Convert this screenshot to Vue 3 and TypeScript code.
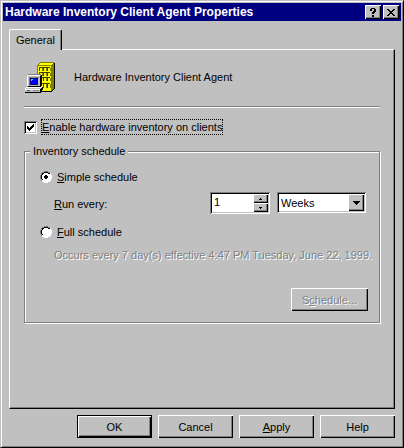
<script setup lang="ts">
import { ref } from 'vue'

type Mode = 'simple' | 'full'

const enabled = ref<boolean>(true)
const mode = ref<Mode>('simple')
const interval = ref<string>('1')
const unit = ref<string>('Weeks')
const units: string[] = ['Hours', 'Days', 'Weeks']

function step(delta: number): void {
  interval.value = String(Math.max(1, (parseInt(interval.value, 10) || 1) + delta))
}
</script>

<template>
  <main class="window">
    <header class="titlebar">
      <h1 class="title">Hardware Inventory Client Agent Properties</h1>
      <div class="caption-buttons">
        <button type="button" class="caption-button" aria-label="What's this?">
          <svg width="8" height="9" viewBox="0 0 8 9" shape-rendering="crispEdges">
            <path d="M2 0h4v1h1v3H6v1H5v1H3V4h1V3h1V1H3v2H1V1h1zM3 7h2v2H3z" />
          </svg>
        </button>
        <button type="button" class="caption-button" aria-label="Close">
          <svg width="8" height="7" viewBox="0 0 8 7" shape-rendering="crispEdges">
            <path d="M0 0h2v1h1v1h2V1h1V0h2v1H7v1H6v1H5v1h1v1h1v1h1v1H6V6H5V5H3v1H2v1H0V6h1V5h1V4h1V3H2V2H1V1H0z" />
          </svg>
        </button>
      </div>
    </header>

    <nav class="tabs" role="tablist">
      <button type="button" class="tab" role="tab" aria-selected="true">General</button>
    </nav>

    <section class="panel">
      <div class="summary">
        <svg class="agent-icon" width="32" height="32" viewBox="0 0 32 32" shape-rendering="crispEdges">
          <path fill="#808000" d="M16 1h14v1H16zM15 2h1v1h-1zM14 3h1v1h-1zM13 4h1v26h-1z" />
          <path fill="#ffff00" d="M16 2h13v1h-1v1H15V3h1zM14 4h13v26H14z" />
          <path fill="#808000" d="M14 4h13v1H14zM27 4h1V3h1V2h1v26h-1v1h-1v1h-1z" />
          <path fill="#000" d="M30 2h1v26h-1v1h-1v1h-1v1H17v-1h11v-1h1v-1h1z" />
          <path fill="#404000" d="M15 6h11v1H15zM15 11h11v1H15zM15 16h11v1H15zM17 22h9v1h-9zM15 7h1v3h-1zM19 7h1v3h-1zM23 7h1v3h-1zM15 12h1v3h-1zM19 12h1v3h-1zM23 12h1v3h-1zM19 17h1v3h-1zM23 17h1v3h-1zM19 23h1v4h-1zM23 23h1v4h-1z" />
          <path fill="#808000" d="M18 7h1v3h-1zM22 7h1v3h-1zM26 7h1v3h-1zM18 12h1v3h-1zM22 12h1v3h-1zM26 12h1v3h-1zM22 17h1v3h-1zM26 17h1v3h-1zM22 23h1v4h-1zM26 23h1v4h-1z" />
          <path fill="#808080" d="M4 13h13v1h1v11h-2v1H3V15h1z" />
          <path fill="#fff" d="M4 14h12v1H4zM3 15h1v10H3z" />
          <path fill="#c0c0c0" d="M4 15h12v10H4z" />
          <path fill="#000" d="M17 14h1v11h-1v1H4v-1h12V15h1z" />
          <path fill="#808080" d="M5 16h10v1H6v8H5z" />
          <path fill="#000080" d="M6 17h8v7H6z" />
          <path fill="#0000ff" d="M7 18h6v5H7z" />
          <path fill="#00ffff" d="M7 18h2v1H8v1H7z" />
          <path fill="#fff" d="M3 26h14v1H2v1H1v-1h1v-1zM1 28h15v1H1z" />
          <path fill="#c0c0c0" d="M3 27h14v1H2v-1zM1 29h15v2H1z" />
          <path fill="#008000" d="M3 29h3v1H3z" />
          <path fill="#808080" d="M9 29h6v1H9zM16 28h1v3h-1z" />
          <path fill="#000" d="M18 26h1v3h-1v1h-1v2H1v-1h15v-3h1v-1h1z" />
        </svg>
        <span>Hardware Inventory Client Agent</span>
      </div>

      <hr class="rule" />

      <div class="option enable">
        <span class="check-box">
          <input id="enable" v-model="enabled" type="checkbox" class="check-input" />
          <svg v-if="enabled" class="check-mark" width="7" height="7" viewBox="0 0 7 7" shape-rendering="crispEdges">
            <path d="M0 2h1v1h1v1h1V3h1V2h1V1h1V0h1v3H6v1H5v1H4v1H3v1H2V6H1V5H0z" />
          </svg>
        </span>
        <label for="enable" class="focused"><u>E</u>nable hardware inventory on clients</label>
      </div>

      <fieldset class="group">
        <legend class="legend">Inventory schedule</legend>

        <div class="option">
          <span class="radio">
            <input id="simple" v-model="mode" type="radio" name="mode" value="simple" class="radio-input" />
            <svg class="radio-art" width="12" height="12" viewBox="0 0 12 12" shape-rendering="crispEdges">
              <path fill="#fff" d="M4 1h4v1h2v2h1v4h-1v2H8v1H4v-1H2V8H1V4h1V2h2z" />
              <path fill="#808080" d="M8 0H4v1H2v1H1v2H0v4h1v2h1V8H1V4h1V2h2V1h4v1h2V1H8z" />
              <path fill="#000" d="M8 1H4v1H2v2H1v4h1v1h1V8H2V4h1V3h1V2h4v1h2V2H8z" />
              <path fill="#fff" d="M11 2h-1v2h1v4h-1v2H8v1H4v-1H2v1h2v1h4v-1h2v-1h1V8h1V4h-1z" />
              <path v-if="mode === 'simple'" fill="#000" d="M5 4h2v1h1v2H7v1H5V7H4V5h1z" />
            </svg>
          </span>
          <label for="simple"><u>S</u>imple schedule</label>
        </div>

        <div class="run-row">
          <label for="interval" class="run-label"><u>R</u>un every:</label>
          <div class="spinner">
            <input id="interval" v-model="interval" type="text" class="spinner-input" />
            <div class="spinner-buttons">
              <button type="button" class="spin" aria-label="Increase" @click="step(1)">
                <svg width="3" height="2" viewBox="0 0 3 2" shape-rendering="crispEdges"><path d="M1 0h1v1h1v1H0V1h1z" /></svg>
              </button>
              <button type="button" class="spin" aria-label="Decrease" @click="step(-1)">
                <svg width="3" height="2" viewBox="0 0 3 2" shape-rendering="crispEdges"><path d="M0 0h3v1H2v1H1V1H0z" /></svg>
              </button>
            </div>
          </div>
          <div class="combo">
            <select v-model="unit" class="combo-select" aria-label="Unit">
              <option v-for="u in units" :key="u">{{ u }}</option>
            </select>
            <span class="combo-arrow">
              <svg width="7" height="4" viewBox="0 0 7 4" shape-rendering="crispEdges"><path d="M0 0h7v1H6v1H5v1H4v1H3V3H2V2H1V1H0z" /></svg>
            </span>
          </div>
        </div>

        <div class="option full">
          <span class="radio">
            <input id="full" v-model="mode" type="radio" name="mode" value="full" class="radio-input" />
            <svg class="radio-art" width="12" height="12" viewBox="0 0 12 12" shape-rendering="crispEdges">
              <path fill="#fff" d="M4 1h4v1h2v2h1v4h-1v2H8v1H4v-1H2V8H1V4h1V2h2z" />
              <path fill="#808080" d="M8 0H4v1H2v1H1v2H0v4h1v2h1V8H1V4h1V2h2V1h4v1h2V1H8z" />
              <path fill="#000" d="M8 1H4v1H2v2H1v4h1v1h1V8H2V4h1V3h1V2h4v1h2V2H8z" />
              <path fill="#fff" d="M11 2h-1v2h1v4h-1v2H8v1H4v-1H2v1h2v1h4v-1h2v-1h1V8h1V4h-1z" />
              <path v-if="mode === 'full'" fill="#000" d="M5 4h2v1h1v2H7v1H5V7H4V5h1z" />
            </svg>
          </span>
          <label for="full"><u>F</u>ull schedule</label>
        </div>

        <p class="occurs">Occurs every 7 day(s) effective 4:47 PM Tuesday, June 22, 1999.</p>

        <div class="schedule-row">
          <button type="button" class="push schedule" :disabled="mode === 'simple'">S<u>c</u>hedule...</button>
        </div>
      </fieldset>
    </section>

    <footer class="actions">
      <button type="button" class="push default">OK</button>
      <button type="button" class="push">Cancel</button>
      <button type="button" class="push"><u>A</u>pply</button>
      <button type="button" class="push">Help</button>
    </footer>
  </main>
</template>

<style>
body {
  background: #c0c0c0;
}
</style>

<style scoped>
.window,
.window * {
  box-sizing: border-box;
}

.window {
  padding: 2px 2px 9px 2px;
  border: 1px solid;
  border-color: #c0c0c0 #000 #000 #c0c0c0;
  box-shadow: inset 1px 1px 0 #fff, inset -1px -1px 0 #808080;
  background: #c0c0c0;
  color: #000;
  font: 11px/16px "Liberation Sans", Arial, sans-serif;
}

button,
input,
select {
  margin: 0;
  padding: 0;
  border: 0;
  border-radius: 0;
  outline: 0;
  appearance: none;
  color: inherit;
  font: inherit;
}

svg {
  display: block;
}

u {
  text-decoration: underline;
  text-decoration-thickness: 1px;
  text-underline-offset: 1px;
}

.titlebar {
  display: flex;
  align-items: center;
  justify-content: space-between;
  height: 18px;
  padding: 0 2px;
  background: #000080;
}

.title {
  margin: 0;
  color: #fff;
  font-size: 12px;
  font-weight: bold;
  line-height: 18px;
  white-space: nowrap;
}

.caption-buttons {
  display: flex;
  gap: 2px;
}

.caption-button {
  display: flex;
  align-items: center;
  justify-content: center;
  width: 16px;
  height: 14px;
  background: #c0c0c0;
  box-shadow: inset 1px 1px 0 #fff, inset -1px -1px 0 #000, inset -2px -2px 0 #808080;
}

.tabs {
  display: flex;
  padding: 8px 6px 0;
}

.tab {
  position: relative;
  width: 53px;
  height: 21px;
  margin-bottom: -1px;
  border: solid;
  border-width: 1px 1px 0;
  border-color: #fff #000 #fff #fff;
  border-radius: 2px 2px 0 0;
  background: #c0c0c0;
  box-shadow: inset -1px 0 0 #808080;
}

.panel {
  margin: 0 6px;
  padding: 11px 14px 85px;
  border: 1px solid;
  border-color: #fff #000 #000 #fff;
  box-shadow: inset -1px -1px 0 #808080;
}

.summary {
  display: flex;
  align-items: center;
  gap: 18px;
}

.rule {
  height: 2px;
  margin: 13px 0 11px;
  border: 0;
  border-top: 1px solid #808080;
  background: #fff;
}

.option {
  display: flex;
  align-items: center;
  gap: 5px;
  height: 16px;
}

.enable {
  gap: 4px;
}

.check-box,
.radio,
.combo {
  display: grid;
}

.check-box > *,
.radio > *,
.combo > * {
  grid-area: 1 / 1;
}

.check-input {
  width: 13px;
  height: 13px;
  background: #fff;
  box-shadow: inset 1px 1px 0 #808080, inset -1px -1px 0 #fff, inset 2px 2px 0 #000, inset -2px -2px 0 #c0c0c0;
}

.check-mark {
  place-self: center;
  pointer-events: none;
}

.focused {
  height: 16px;
  padding: 0 1px;
  outline: 1px dotted #000;
  outline-offset: -1px;
}

.group {
  min-width: 0;
  margin: 10px 0 0;
  padding: 11px 11px 11px 15px;
  border: 1px solid #808080;
  box-shadow: 1px 1px 0 #fff, inset 1px 1px 0 #fff;
}

.legend {
  margin-left: -10px;
  padding: 0 3px;
  background: #c0c0c0;
  line-height: 13px;
}

.radio-input {
  width: 12px;
  height: 12px;
}

.radio-art {
  pointer-events: none;
}

.run-row {
  display: flex;
  align-items: flex-start;
  margin-top: 7px;
  padding: 0 2px 0 14px;
}

.run-label {
  flex: 1;
  line-height: 24px;
  height: 22px;
}

.spinner {
  display: flex;
  width: 60px;
  height: 22px;
  padding: 2px;
  background: #fff;
  box-shadow: inset 1px 1px 0 #808080, inset -1px -1px 0 #fff, inset 2px 2px 0 #000, inset -2px -2px 0 #c0c0c0;
}

.spinner-input {
  flex: 1;
  min-width: 0;
  height: 16px;
  padding-left: 2px;
  background: transparent;
}

.spinner-buttons {
  display: flex;
  flex-direction: column;
  width: 15px;
}

.spin {
  display: flex;
  flex: 1;
  align-items: center;
  justify-content: center;
  background: #c0c0c0;
  box-shadow: inset 1px 1px 0 #fff, inset -1px -1px 0 #000, inset -2px -2px 0 #808080;
}

.combo {
  width: 89px;
  height: 21px;
  margin-left: 7px;
  padding: 2px;
  background: #fff;
  box-shadow: inset 1px 1px 0 #808080, inset -1px -1px 0 #fff, inset 2px 2px 0 #000, inset -2px -2px 0 #c0c0c0;
}

.combo-select {
  width: 100%;
  height: 17px;
  padding-left: 2px;
  background: transparent;
}

.combo-arrow {
  display: flex;
  align-items: center;
  justify-content: center;
  justify-self: end;
  width: 16px;
  background: #c0c0c0;
  box-shadow: inset 1px 1px 0 #fff, inset -1px -1px 0 #000, inset -2px -2px 0 #808080;
  pointer-events: none;
}

.full {
  margin-top: 10px;
}

.occurs {
  margin: 7px 0 25px;
  padding-left: 14px;
  color: #808080;
  text-shadow: 1px 1px 0 #fff;
  white-space: nowrap;
}

.schedule-row {
  display: flex;
  justify-content: flex-end;
}

.push {
  width: 75px;
  height: 23px;
  background: #c0c0c0;
  box-shadow: inset 1px 1px 0 #fff, inset -1px -1px 0 #000, inset -2px -2px 0 #808080;
  text-align: center;
}

.push:disabled {
  color: #808080;
  text-shadow: 1px 1px 0 #fff;
}

.schedule {
  width: 77px;
}

.default {
  border: 1px solid #000;
}

.actions {
  display: flex;
  justify-content: flex-end;
  gap: 6px;
  padding: 6px 6px 0;
}
</style>
